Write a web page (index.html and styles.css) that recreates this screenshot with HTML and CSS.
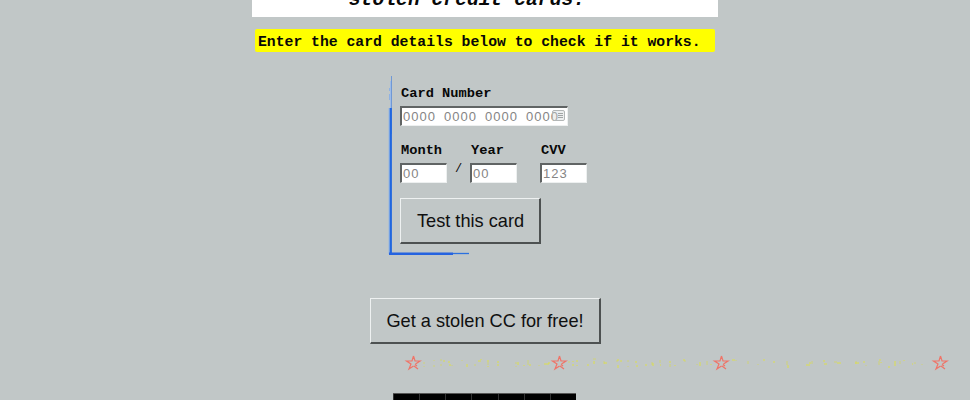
FILE: index.html
```html
<!DOCTYPE html>
<html lang="en">
<head>
<meta charset="utf-8">
<title>Card check</title>
<link rel="stylesheet" href="styles.css">
</head>
<body>
<header class="title">stolen credit cards.</header>
<p class="notice">Enter the card details below to check if it works.</p>
<form class="card-form">
  <svg class="trace" width="84" height="184" viewBox="0 0 84 184">
    <path d="M1.5 5V60" stroke="#9dbce8" stroke-width="1"/>
    <path d="M2.5 0V58" stroke="#6f98d6" stroke-width="1"/>
    <path d="M.5 12V15M.5 18V24" stroke="#8fb2e4" stroke-width="1"/>
    <path d="M1.7 32V178" stroke="#2167df" stroke-width="2.4"/>
    <path d="M.2 32V178" stroke="#72a6f4" stroke-width=".8"/>
    <path d="M0 177.7H64" stroke="#2563e0" stroke-width="2.6"/>
    <path d="M64 177.5H80" stroke="#2c71df" stroke-width="1.3"/>
  </svg>
  <label class="field number"><span class="name">Card Number</span>
    <span class="control"><input type="text" placeholder="0000 0000 0000 0000">
      <svg class="card-icon" width="13" height="11" viewBox="0 0 13 11"><rect x=".5" y=".5" width="12" height="10" rx="1.5" fill="#d3d6d6" fill-opacity=".4" stroke="#b3b7b7"/><path d="M6 3.5h5M6 5.5h5M6 7.5h5" stroke="#a1a5a5"/></svg>
    </span>
  </label>
  <div class="row">
    <label class="field"><span class="name">Month</span><input type="text" placeholder="00"></label>
    <span class="slash">/</span>
    <label class="field"><span class="name">Year</span><input type="text" placeholder="00"></label>
    <label class="field cvv"><span class="name">CVV</span><input type="text" placeholder="123"></label>
  </div>
  <button class="btn test" type="button">Test this card</button>
</form>
<button class="btn free" type="button">Get a stolen CC for free!</button>
<svg class="ticker" width="970" height="18" viewBox="0 0 970 18">
  <defs>
    <path id="star" d="M7.5 1L6 6H.5L5 9L3 14L7.5 11M7.5 1L9 6H14L9.5 9M8 11L12 14M9 9.5L11 11" fill="none" stroke="#ef7468" stroke-width="1.2"/>
  </defs>
  <path class="specks faint" d="M424 7v2m0 2v1M434 5v1m0 4v2M440 5h2m-1 4v2M452 10v1M462 5v1M475 9v2M488 7v3M515 8h2m-1 3v1M528 5v5M539 10v1M569 6v2M593 4h3M604 6v3M617 5v2M628 5v2m0 4v1M652 7v3M660 5v3M670 9v3M684 6h2M697 9v1M707 6v4M736 5v1M748 6v3M758 9v1M787 6v4M812 6v3M834 7h3M856 6v3M866 10v1M879 6v4M900 6v3M914 8h2M922 9v1"/>
  <path class="specks" d="M444 5v2M448 7h2m0 2v2M467 9v3M478 6h3m0-2v1M488 5v2m0 4v1M498 6v2m0 1v2M518 7v3M524 10v1M530 9v2M544 9h5m0-2v2M573 6v1m4 3v1M577 5v2M573 9v2M587 10h2M594 6v3M604 8h3M618 4v2m3-1v2m-3 3v3M636 6v2m1 2v2M646 9v2M653 8v3M660 10h1M670 6v2m5 2v1M684 4v2M700 7v4M711 9v1M732 5h3M764 4v2M774 6v2M788 10v3M806 10h4m0-3v2M824 5v2m0 2h3M837 8h4M855 8h4M864 6v2M879 5h2m0 2v1M888 12h2M895 6v5M904 5v1M912 9h1"/>
  <use href="#star" x="406" y="0"/><use href="#star" x="552" y="0"/><use href="#star" x="714" y="0"/><use href="#star" x="933" y="0"/>
</svg>
<footer class="counter"><i></i><i></i><i></i><i></i><i></i><i></i><i></i></footer>
</body>
</html>
```
FILE: styles.css
```css
* { box-sizing: border-box; }
body {
  margin: 0;
  height: 400px;
  overflow: hidden;
  background: #c1c7c7;
  color: #080808;
  display: flex;
  flex-direction: column;
  align-items: center;
  font-family: "Liberation Mono", monospace;
}
.title {
  flex: none;
  width: 466px;
  height: 17px;
  background: #fff;
  display: flex;
  align-items: flex-end;
  justify-content: center;
  padding: 0 36px 6px 0;
  font: italic bold 19.7px/22px "Liberation Mono", monospace;
}
.notice {
  flex: none;
  width: 460px;
  height: 23px;
  margin: 12px 0 0;
  padding-left: 3px;
  border-radius: 2px;
  background: #ff0;
  font-size: 14.75px;
  line-height: 26px;
  font-weight: bold;
  white-space: nowrap;
}
.card-form {
  flex: none;
  position: relative;
  width: 192px;
  height: 179px;
  margin-top: 24px;
  padding: 9px 0 0 11px;
}
.trace { position: absolute; left: 0; top: 0; overflow: visible; }
.field {
  display: block;
  font-size: 13.7px;
  line-height: 17px;
  font-weight: bold;
}
.name { display: block; padding-left: 1px; }
.number { height: 57px; }
.control { display: block; position: relative; width: 168px; }
input {
  display: block;
  width: 47px;
  height: 20px;
  margin-top: 4px;
  padding: 0 0 0 1px;
  border: 1px solid;
  border-width: 2px 1px 1px 2px;
  border-color: #606464 #edf0f0 #edf0f0 #606464;
  border-radius: 0;
  background: #fff;
  font: 13px/17px "Liberation Sans", sans-serif;
  letter-spacing: .98px;
  word-spacing: 3.6px;
}
.control input { width: 168px; }
input::placeholder { color: #858585; opacity: 1; }
.card-icon { position: absolute; right: 3px; top: 4px; }
.row { display: flex; height: 56px; }
.row .field { flex: none; width: 47px; white-space: nowrap; }
.slash { flex: none; width: 23px; padding: 19px 0 0 8px; font-size: 12px; line-height: 16px; }
.row .cvv { margin-left: 23px; }
.btn {
  display: block;
  flex: none;
  height: 46px;
  padding: 2px 0 0 1px;
  border: 1px solid;
  border-width: 1px 2px 2px 1px;
  border-color: #eef1f1 #4d5151 #4d5151 #eef1f1;
  border-radius: 0;
  background: #c1c7c7;
  color: #101010;
  font: 18.2px/41px "Liberation Sans", sans-serif;
  white-space: nowrap;
}
.test { width: 141px; }
.free { width: 231px; margin-top: 43px; }
.ticker { flex: none; margin-top: 11px; }
.specks { fill: none; stroke: #dddf4c; stroke-width: 1; }
.faint { stroke: #cfd27a; }
.counter {
  flex: none;
  display: flex;
  width: 183px;
  height: 8px;
  margin: 20px 1px 0 0;
  background: #000;
  border-top: 1px solid #555;
}
.counter i { flex: 1; border-left: 1px solid #333; }
```
